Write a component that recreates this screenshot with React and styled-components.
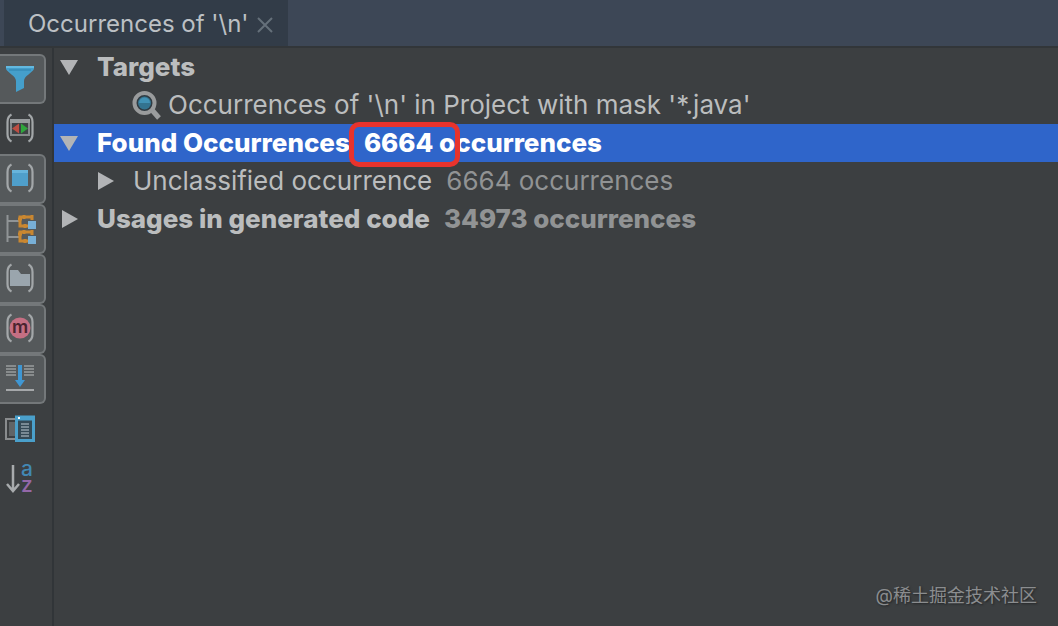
import React, { useState } from "react";
import styled, { createGlobalStyle } from "styled-components";

const GlobalStyle = createGlobalStyle`
  * {
    box-sizing: border-box;
  }

  body {
    margin: 0;
    background: #3c3f41;
    font-family: Inter, "Noto Sans CJK SC", sans-serif;
  }

  button {
    padding: 0;
    border: 0;
    background: none;
    color: inherit;
    font: inherit;
    cursor: pointer;
  }
`;

const Window = styled.div`
  display: flex;
  flex-direction: column;
  min-height: 100vh;
  color: #bbbdbe;
  font-size: 26px;
`;

const TabBar = styled.header`
  display: flex;
  height: 48px;
  padding-left: 4px;
  background: #3d4756;
  border-bottom: 2px solid #323639;
`;

const Tab = styled.div`
  display: flex;
  align-items: center;
  gap: 8px;
  padding: 2px 15px 0 24px;
  background: #323c48;
  white-space: nowrap;
`;

const TabTitle = styled.button`
  font-size: 24px;
  line-height: 44px;
  color: #bcc0c4;
`;

const CloseButton = styled.button`
  display: flex;
  margin-top: 2px;
`;

const Main = styled.div`
  display: flex;
  flex: 1;
`;

const Toolbar = styled.nav`
  display: flex;
  flex-direction: column;
  width: 54px;
  padding-top: 6px;
  border-right: 2px solid #313538;
`;

const ToolButton = styled.button`
  display: flex;
  align-items: center;
  width: 46px;
  height: 50px;
  padding-left: 3px;
  border: 2px solid ${({ $on }) => ($on ? "#74787a" : "transparent")};
  border-left: 0;
  border-radius: 0 6px 6px 0;
  background: ${({ $on }) => ($on ? "#55595b" : "transparent")};
`;

const ToolSvg = styled.svg`
  overflow: visible;
`;

const Content = styled.main`
  display: flex;
  flex: 1;
  flex-direction: column;
  justify-content: space-between;
  min-width: 0;
`;

const Tree = styled.div``;

const Row = styled.div`
  display: flex;
  align-items: center;
  height: 38px;
  padding: 0 0 2px ${({ $level }) => ($level ? 42 : 6)}px;
  background: ${({ $selected }) => ($selected ? "#2f65ca" : "transparent")};
  color: ${({ $selected }) => ($selected ? "#ffffff" : "inherit")};
  font-weight: ${({ $bold }) => ($bold ? 800 : 400)};
  white-space: nowrap;
`;

const Toggle = styled.button`
  display: flex;
  width: 37px;
  margin-top: 2px;
  color: #b2b4b6;
`;

const LeafIcon = styled.span`
  display: flex;
  width: 36px;
  margin: 4px 0 0 36px;
`;

const Count = styled.span`
  position: relative;
  margin-left: 14px;
  color: ${({ $selected }) => ($selected ? "#ffffff" : "#919394")};
`;

const Highlight = styled.span`
  position: absolute;
  top: -5px;
  left: -15px;
  width: 111px;
  height: 45px;
  border: 5px solid #e8332c;
  border-radius: 10px;
`;

const Watermark = styled.footer`
  padding: 0 21px 17px;
  color: #8b8d8f;
  font-size: 18px;
  line-height: 26px;
  text-align: right;
  text-shadow: 1px 1px 2px #232527;
`;

const Svg = ({ children }) => (
  <ToolSvg width="34" height="34" viewBox="0 0 34 34" fill="none" aria-hidden="true">
    {children}
  </ToolSvg>
);

const Brackets = () => (
  <path
    d="M8.500 2.500C5.500 4 4.500 6 4.500 10V22C4.500 26 5.500 28 8.500 29.500M25.500 2.500C28.500 4 29.500 6 29.500 10V22C29.500 26 28.500 28 25.500 29.500"
    stroke="#a3a7a9"
    strokeWidth="2.200"
  />
);

const FilterIcon = () => (
  <Svg>
    <path d="M3 4H31V7C29 11 21 14 21 19V26L13 30V19C13 14 5 11 3 7Z" fill="#459fcb" />
    <path d="M3 4H31V6H3Z" fill="#63b9e0" />
    <path d="M6 8H28" stroke="#2f81ad" />
  </Svg>
);

const ReadWriteIcon = () => (
  <Svg>
    <path d="M8 8H26V23H8Z" fill="#3f4345" stroke="#85898b" strokeWidth="2" />
    <path d="M7 7H27V11H7Z" fill="#989c9e" />
    <path d="M16 11.500V21.500L9 16.500Z" fill="#bd4e43" />
    <path d="M18 11.500V21.500L25 16.500Z" fill="#2fa63c" />
    <Brackets />
  </Svg>
);

const ModuleIcon = () => (
  <Svg>
    <Brackets />
    <path d="M9 8H25V24H9Z" fill="#4f9fcb" />
    <path d="M9 8H25V11H9Z" fill="#67b4dc" />
  </Svg>
);

const StructureIcon = () => (
  <Svg>
    <path d="M4.500 3V30M4 9H16M4 25H16" stroke="#909496" strokeWidth="2" />
    <path
      d="M30 5H17V14H25M29 3V8M21 3V7M22 12V16M15 7H19M30 20H17V29H25M29 18V23M21 18V22M22 27V31M15 22H19"
      stroke="#c98731"
      strokeWidth="3"
    />
    <path d="M25 9H33V17H25ZM25 24H33V32H25Z" fill="#78afd6" />
  </Svg>
);

const FolderIcon = () => (
  <Svg>
    <Brackets />
    <path d="M7 8H15L18 12H27V24H7Z" fill="#9aa5ad" />
  </Svg>
);

const MethodIcon = () => (
  <Svg>
    <circle cx="17" cy="16" r="10.500" fill="#c56f83" />
    <Brackets />
    <text x="17" y="21" fill="#4c2430" fontSize="18" fontWeight="600" textAnchor="middle">
      m
    </text>
  </Svg>
);

const ScrollIcon = () => (
  <Svg>
    <path
      d="M3 4H13M3 7H13M3 10H13M3 13H13M21 4H31M21 7H31M21 10H31M21 13H31"
      stroke="#999d9f"
      strokeWidth="1.500"
    />
    <path d="M15 3H19V18H22L17 25L12 18H15Z" fill="#3f97d3" />
    <path d="M3 28H31" stroke="#a5a8aa" strokeWidth="2" />
  </Svg>
);

const PreviewIcon = () => (
  <Svg>
    <path d="M12 7H3V27H12" stroke="#898c8e" strokeWidth="2" />
    <path d="M6 10H12V24H6Z" fill="#606466" />
    <path d="M13.500 5.500H30.500V28.500H13.500Z" fill="#344a56" stroke="#4aa0cb" strokeWidth="3" />
    <path d="M12 6H32" stroke="#4aa0cb" strokeWidth="5" />
    <path d="M15 5H17V7H15Z" fill="#ffffff" />
    <path d="M18 12H26M18 15H26M18 18H26M18 21H26M18 24H26" stroke="#8fa0a9" strokeWidth="1.500" />
  </Svg>
);

const SortIcon = () => (
  <Svg>
    <path d="M10 3V28M4 22L10 29L16 22" stroke="#a8abad" strokeWidth="2.500" />
    <text x="18" y="14" fill="#4288b3" fontSize="21" fontWeight="500">
      a
    </text>
    <text x="18" y="30" fill="#9468a8" fontSize="21" fontWeight="500">
      z
    </text>
  </Svg>
);

const SearchIcon = () => (
  <svg width="32" height="32" viewBox="0 0 32 32" aria-hidden="true">
    <path d="M20 20L27 28" stroke="#9b9d9e" strokeWidth="5" />
    <circle cx="12.500" cy="13" r="10" fill="#303b42" stroke="#999b9c" strokeWidth="4" />
    <circle cx="12.500" cy="13" r="6.500" fill="#33738f" />
    <path d="M7 13A5.500 5.500 0 0 1 18 13Z" fill="#4192b5" />
  </svg>
);

const Arrow = ({ open }) => (
  <svg width="18" height="18" viewBox="0 0 18 18" fill="currentColor" aria-hidden="true">
    <path d={open ? "M0 2H18L9 17Z" : "M2 0L18 9L2 18Z"} />
  </svg>
);

const tools = [
  { name: "Filter", icon: FilterIcon, on: true },
  { name: "Read and write access", icon: ReadWriteIcon },
  { name: "Group by module", icon: ModuleIcon, on: true },
  { name: "Group by file structure", icon: StructureIcon, on: true },
  { name: "Group by directory", icon: FolderIcon, on: true },
  { name: "Group by method", icon: MethodIcon, on: true },
  { name: "Autoscroll to source", icon: ScrollIcon, on: true },
  { name: "Preview usages", icon: PreviewIcon },
  { name: "Sort alphabetically", icon: SortIcon },
];

const App = () => {
  const [active, setActive] = useState(tools.map((tool) => Boolean(tool.on)));

  const toggleTool = (index) => {
    setActive(active.map((on, i) => (i === index ? !on : on)));
  };

  return (
    <Window>
      <GlobalStyle />
      <TabBar>
        <Tab>
          <TabTitle>Occurrences of '\n'</TabTitle>
          <CloseButton aria-label="Close tab">
            <svg width="16" height="16" viewBox="0 0 16 16" stroke="#65707a" strokeWidth="2">
              <path d="M1 1L15 15M15 1L1 15" />
            </svg>
          </CloseButton>
        </Tab>
      </TabBar>

      <Main>
        <Toolbar aria-label="Usage view">
          {tools.map(({ name, icon: Icon }, index) => (
            <ToolButton
              key={name}
              $on={active[index]}
              aria-label={name}
              aria-pressed={active[index]}
              onClick={() => toggleTool(index)}
            >
              <Icon />
            </ToolButton>
          ))}
        </Toolbar>

        <Content>
          <Tree role="tree">
            <Row role="treeitem" $bold>
              <Toggle aria-label="Collapse Targets"><Arrow open /></Toggle>
              <span>Targets</span>
            </Row>
            <Row role="treeitem" $level={1}>
              <LeafIcon><SearchIcon /></LeafIcon>
              <span>Occurrences of '\n' in Project with mask '*.java'</span>
            </Row>
            <Row role="treeitem" aria-selected="true" $bold $selected>
              <Toggle aria-label="Collapse Found Occurrences"><Arrow open /></Toggle>
              <span>Found Occurrences</span>
              <Count $selected>
                6664 occurrences
                <Highlight />
              </Count>
            </Row>
            <Row role="treeitem" $level={1}>
              <Toggle aria-label="Expand Unclassified occurrence"><Arrow /></Toggle>
              <span>Unclassified occurrence</span>
              <Count>6664 occurrences</Count>
            </Row>
            <Row role="treeitem" $bold>
              <Toggle aria-label="Expand Usages in generated code"><Arrow /></Toggle>
              <span>Usages in generated code</span>
              <Count>34973 occurrences</Count>
            </Row>
          </Tree>
          <Watermark>@稀土掘金技术社区</Watermark>
        </Content>
      </Main>
    </Window>
  );
};

export default App;
